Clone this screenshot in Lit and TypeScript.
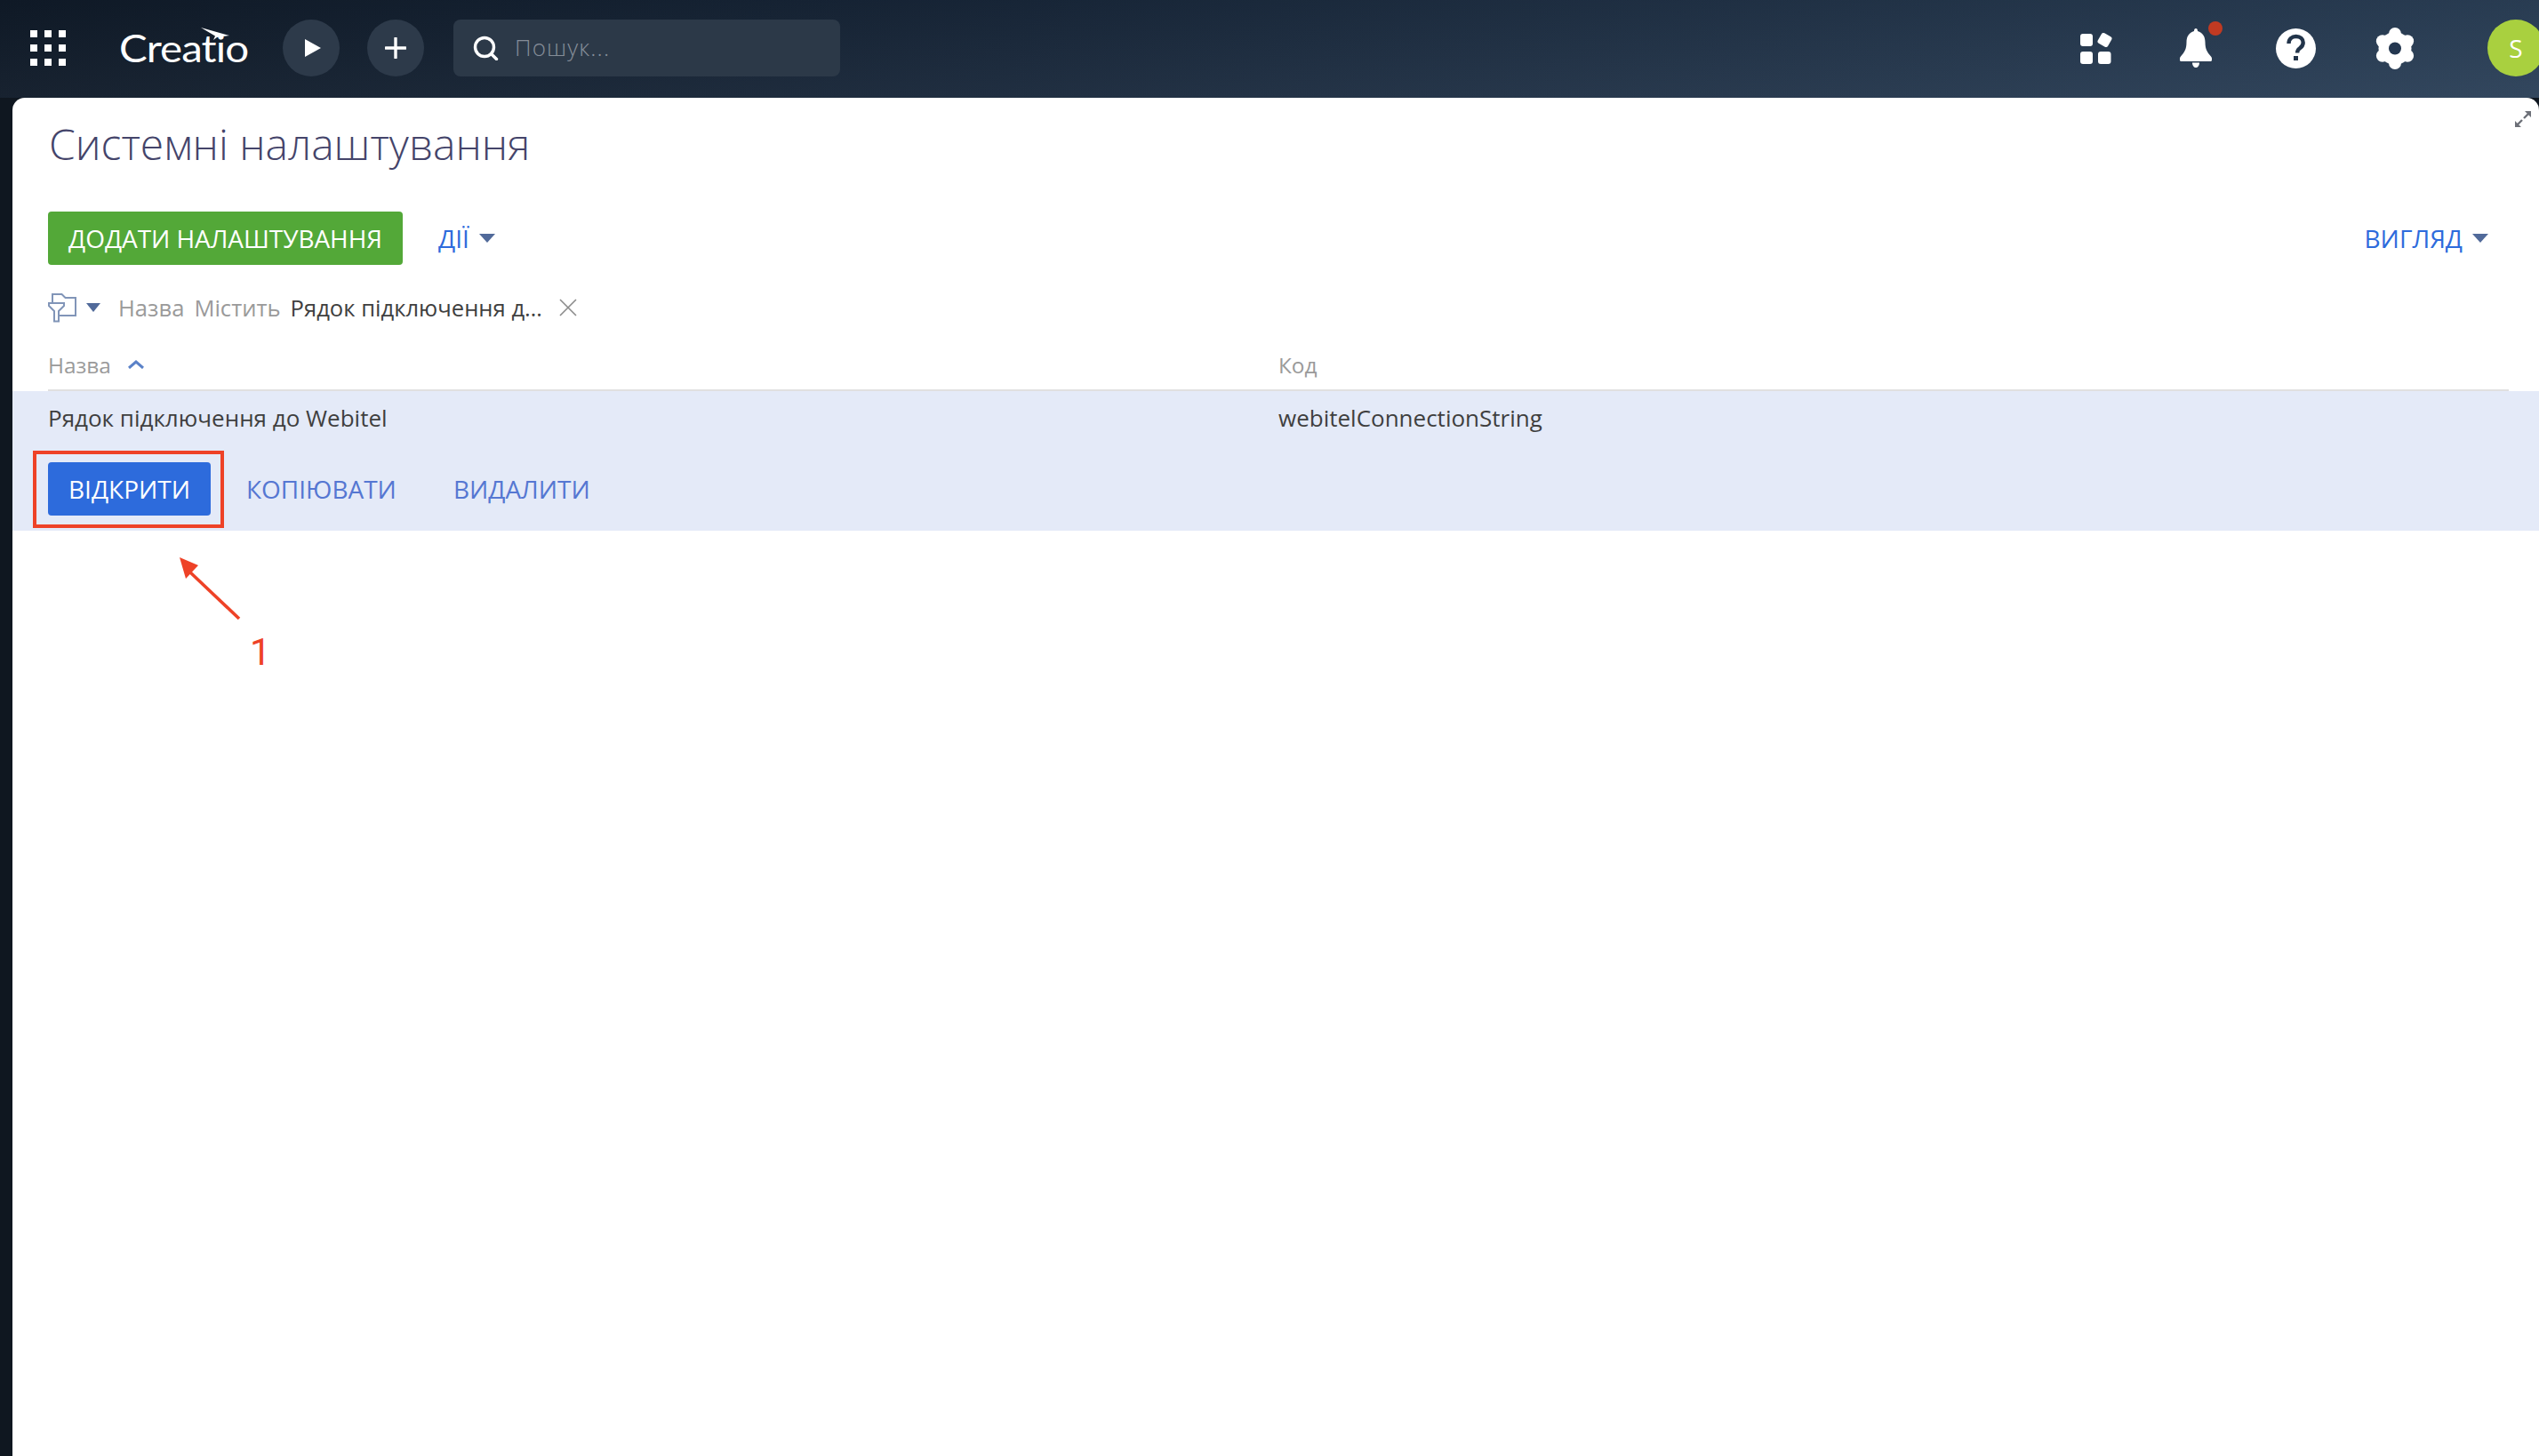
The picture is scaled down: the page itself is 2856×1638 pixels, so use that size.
import { LitElement, html, css, svg } from "lit";
import { customElement } from "lit/decorators.js";

const caret = html`<svg class="caret" viewBox="0 0 18 10"><path d="M0 0h18L9 10z" fill="#516a9a"/></svg>`;
const lobes = [90, 150, 210, 270, 330, 30].map((a) => {
  const r = (a * Math.PI) / 180;
  return { x: 22 + 16.3 * Math.cos(r), y: 23.5 + 16.5 * Math.sin(r) };
});

@customElement("app-root")
export class AppRoot extends LitElement {
  static styles = css`
    :host {
      display: block;
      width: 2856px;
      height: 1638px;
      overflow: hidden;
      position: relative;
      font-family: "Open Sans", sans-serif;
      background: #0f1720;
    }
    .page { display: flex; flex-direction: column; height: 1638px; }
    .top {
      height: 110px;
      flex: none;
      display: flex;
      align-items: center;
      padding: 0 0 2px 34px;
      box-sizing: border-box;
      background:
        linear-gradient(180deg, rgba(0, 0, 0, 0.08), rgba(255, 255, 255, 0.03)),
        linear-gradient(100deg, #101b29 0%, #19283b 40%, #2c4159 100%);
    }
    .grid { display: grid; grid-template-columns: repeat(3, 8px); grid-auto-rows: 8px; gap: 8px; margin-right: 60px; }
    .grid i { background: #fff; display: block; }
    .logo { position: relative; width: 144px; margin-right: 40px; height: 64px; display: flex; align-items: flex-end; padding-bottom: 7px; box-sizing: border-box; }
    .logo span { font-family: "Lato", sans-serif; font-weight: 400; font-size: 42px; line-height: 50px; letter-spacing: -0.8px; color: #fff; display: block; transform: scaleX(1.13); transform-origin: left center; }
    .logo svg { position: absolute; left: 92px; top: 9px; width: 33px; height: 14px; }
    .circ { width: 64px; height: 64px; border-radius: 50%; background: #2d3a4a; display: flex; align-items: center; justify-content: center; margin-right: 31px; }
    .play { padding-left: 4px; box-sizing: border-box; }
    .search { width: 435px; height: 64px; border-radius: 8px; background: #2c3948; margin-left: 2px; display: flex; align-items: center; padding-left: 22px; box-sizing: border-box; gap: 18px; color: #858d98; font-size: 26px; font-weight: 300; letter-spacing: 1.1px; }
    .search span { display: block; margin-bottom: 2px; }
    .right { margin-left: auto; display: flex; align-items: center; }
    .ic { display: block; }
    .bellw { position: relative; width: 48px; height: 60px; margin-left: 75px; }
    .bell { position: absolute; left: 0; top: 8px; }
    .dot { position: absolute; left: 32px; top: 0; width: 16px; height: 16px; border-radius: 50%; background: #c13a22; }
    .help { margin-left: 60px; }
    .gear { margin-left: 67px; }
    .av { width: 64px; height: 64px; border-radius: 50%; background: #a9d03f; color: #fff; font-size: 28px; font-weight: 400; display: flex; align-items: center; justify-content: center; margin: 0 -6px 0 82px; }

    .main { flex: 1; margin-left: 14px; background: #fff; border-radius: 14px 14px 0 0; position: relative; display: flex; flex-direction: column; }
    .expand { position: absolute; left: 2815px; top: 15px; width: 18px; height: 18px; }
    .title { margin: 20px 0 0 41px; font-size: 48px; font-weight: 300; line-height: 64px; color: #44446a; }
    .tools { display: flex; align-items: center; margin: 44px 0 0 40px; height: 60px; padding-right: 57px; font-size: 28px; }
    .btn { height: 60px; border-radius: 4px; display: flex; align-items: center; color: #fff; box-sizing: border-box; font-size: 28px; }
    .green { width: 399px; background: #53a838; justify-content: center; letter-spacing: -0.06px; }
    .link { color: #2d6bdc; display: flex; align-items: center; gap: 11px; }
    .caret { width: 18px; height: 10px; display: block; }
    .actions { margin-left: 40px; }
    .view { margin-left: auto; }
    .filter { display: flex; align-items: center; margin: 27px 0 0 40px; height: 42px; font-size: 25.6px; color: #9a9a9a; }
    .fcaret { margin: 0 20px 0 10px; width: 16px; height: 10px; display: block; }
    .val { color: #3f3f3f; margin-left: 11px; }
    .mid { margin-left: 11px; }
    .x { margin-left: 19px; }
    .thead { display: flex; margin: 20px 34px 0 40px; height: 46px; padding-bottom: 5px; border-bottom: 2px solid #e0e0e0; box-sizing: content-box; font-size: 24.4px; color: #9a9a9a; align-items: center; }
    .col1 { width: 1384px; display: flex; align-items: center; flex: none; }
    .sort { width: 20px; height: 10px; margin-left: 18px; display: block; }
    .row { background: #e4eaf8; height: 157px; box-sizing: border-box; padding: 0 0 0 40px; font-size: 26px; color: #3f3f3f; }
    .cells { display: flex; align-items: center; height: 60px; margin-bottom: 20px; }
    .rbtns { display: flex; align-items: center; height: 60px; }
    .blue { width: 183px; background: #2d6bdc; justify-content: center; }
    .lnk { color: #5577d2; font-size: 28px; }
    .copy { margin-left: 40px; }
    .del { margin-left: 64px; }
    .ann { position: absolute; left: 0; top: 0; width: 2856px; height: 1638px; pointer-events: none; }
    .annbox { position: absolute; left: 37px; top: 507px; width: 215px; height: 87px; border: 4px solid #ee4227; box-sizing: border-box; }
    .num { position: absolute; left: 281px; top: 710px; font-family: "Roboto", sans-serif; font-size: 42px; line-height: 48px; color: #ee4227; }
  `;

  render() {
    return html`
      <div class="page">
        <div class="top">
          <div class="grid">${Array.from({ length: 9 }, () => html`<i></i>`)}</div>
          <div class="logo">
            <span>Creatio</span>
            <svg viewBox="0 0 33 14"><path d="M0 0 L32 9 L18 11 L14 14 L16 9.5 Z" fill="#fff"/></svg>
          </div>
          <div class="circ play"><svg width="18" height="20" viewBox="0 0 18 20"><path d="M0 0l18 10L0 20z" fill="#fff"/></svg></div>
          <div class="circ"><svg width="24" height="24" viewBox="0 0 24 24"><path d="M12 1v22M1 12h22" stroke="#fff" stroke-width="3.4" stroke-linecap="round"/></svg></div>
          <div class="search">
            <svg width="29" height="28" viewBox="0 0 29 28"><circle cx="13" cy="13" r="10.500" fill="none" stroke="#fff" stroke-width="3.4"/><path d="M20.500 20.500l6 6" stroke="#fff" stroke-width="3.4" stroke-linecap="round"/></svg>
            <span>Пошук...</span>
          </div>
          <div class="right">
            <svg class="ic" width="37" height="37" viewBox="0 0 37 37" fill="#fff">
              <rect x="0" y="2" width="14" height="14" rx="3"/><rect x="0" y="22" width="14" height="14" rx="3"/><rect x="20" y="22" width="14.500" height="14" rx="3"/>
              <rect x="21" y="2.500" width="13" height="13" rx="2.500" transform="rotate(30 27.500 9)"/>
            </svg>
            <div class="bellw">
              <svg class="ic bell" width="36" height="44" viewBox="0 0 36 44" fill="#fff">
                <path d="M18 0c1.300 0 2 1 2 3 C25.500 4.500 28.500 9 28.500 15.500c0 8 2.500 11.500 6.500 16 .8 1 1 1.300 1 2.500v1.500c0 .9-.6 1.500-1.500 1.500H1.500C.6 37 0 36.400 0 35.500V34c0-1.200.2-1.500 1-2.500 4-4.500 6.500-8 6.500-16C7.500 9 10.500 4.500 16 3c0-2 .7-3 2-3z"/>
                <path d="M14 38.500h8c0 3.500-2 5.500-4 5.500s-4-2-4-5.500z"/>
              </svg>
              <i class="dot"></i>
            </div>
            <svg class="ic help" width="45" height="45" viewBox="0 0 45 45">
              <circle cx="22.500" cy="22.500" r="22.500" fill="#fff"/>
              <path d="M14.500 17c0-5 3.500-8 8.200-8s8 3 8 7c0 3-1.500 4.800-4 6.500-2 1.400-2.600 2.400-2.600 5" fill="none" stroke="#22344a" stroke-width="4.400"/>
              <rect x="20" y="31" width="5" height="5" fill="#22344a"/>
            </svg>
            <svg class="ic gear" width="44" height="47" viewBox="0 0 44 47">
              <circle cx="22" cy="23.500" r="18.500" fill="#fff"/>
              ${lobes.map((p) => svg`<circle cx=${p.x} cy=${p.y} r="7" fill="#fff"/>`)}
              <circle cx="22" cy="23.500" r="7" fill="#243750"/>
            </svg>
            <div class="av">S</div>
          </div>
        </div>
        <div class="main">
          <svg class="expand" viewBox="0 0 18 18"><path d="M10 8l6-6M8 10l-6 6" stroke="#6d7078" stroke-width="2.400"/><path d="M11 0h7v7zM0 11v7h7z" fill="#6d7078"/></svg>
          <div class="title">Системні налаштування</div>
          <div class="tools">
            <div class="btn green">ДОДАТИ НАЛАШТУВАННЯ</div>
            <div class="link actions">ДІЇ ${caret}</div>
            <div class="link view">ВИГЛЯД ${caret}</div>
          </div>
          <div class="filter">
            <svg width="33" height="33" viewBox="0 0 33 33" fill="none" stroke="#8195b8" stroke-width="2"><path d="M5 10V1h10.500l4 4H31v20H13"/><path d="M1 11h17v3l-6 6v11.500H7V20l-6-6z"/></svg>
            <svg class="fcaret" viewBox="0 0 16 10"><path d="M0 0h16L8 10z" fill="#516a9a"/></svg>
            <span>Назва</span><span class="mid">Містить</span><span class="val">Рядок підключення д…</span>
            <svg class="x" width="20" height="20" viewBox="0 0 20 20"><path d="M1 1l18 18M19 1L1 19" stroke="#8a8a8a" stroke-width="1.600"/></svg>
          </div>
          <div class="thead">
            <div class="col1">Назва <svg class="sort" viewBox="0 0 20 10"><path d="M2 9l8-7 8 7" fill="none" stroke="#5b82c8" stroke-width="3"/></svg></div>
            <div>Код</div>
          </div>
          <div class="row">
            <div class="cells"><div class="col1">Рядок підключення до Webitel</div><div>webitelConnectionString</div></div>
            <div class="rbtns">
              <div class="btn blue">ВІДКРИТИ</div>
              <div class="lnk copy">КОПІЮВАТИ</div>
              <div class="lnk del">ВИДАЛИТИ</div>
            </div>
          </div>
        </div>
      </div>
      <div class="annbox"></div>
      <svg class="ann" viewBox="0 0 2856 1638">
        <path d="M269 696L212 642" stroke="#ee4227" stroke-width="3.600" fill="none"/>
        <path d="M202 627L223 636 209 651Z" fill="#ee4227"/>
      </svg>
      <div class="num">1</div>
    `;
  }
}
